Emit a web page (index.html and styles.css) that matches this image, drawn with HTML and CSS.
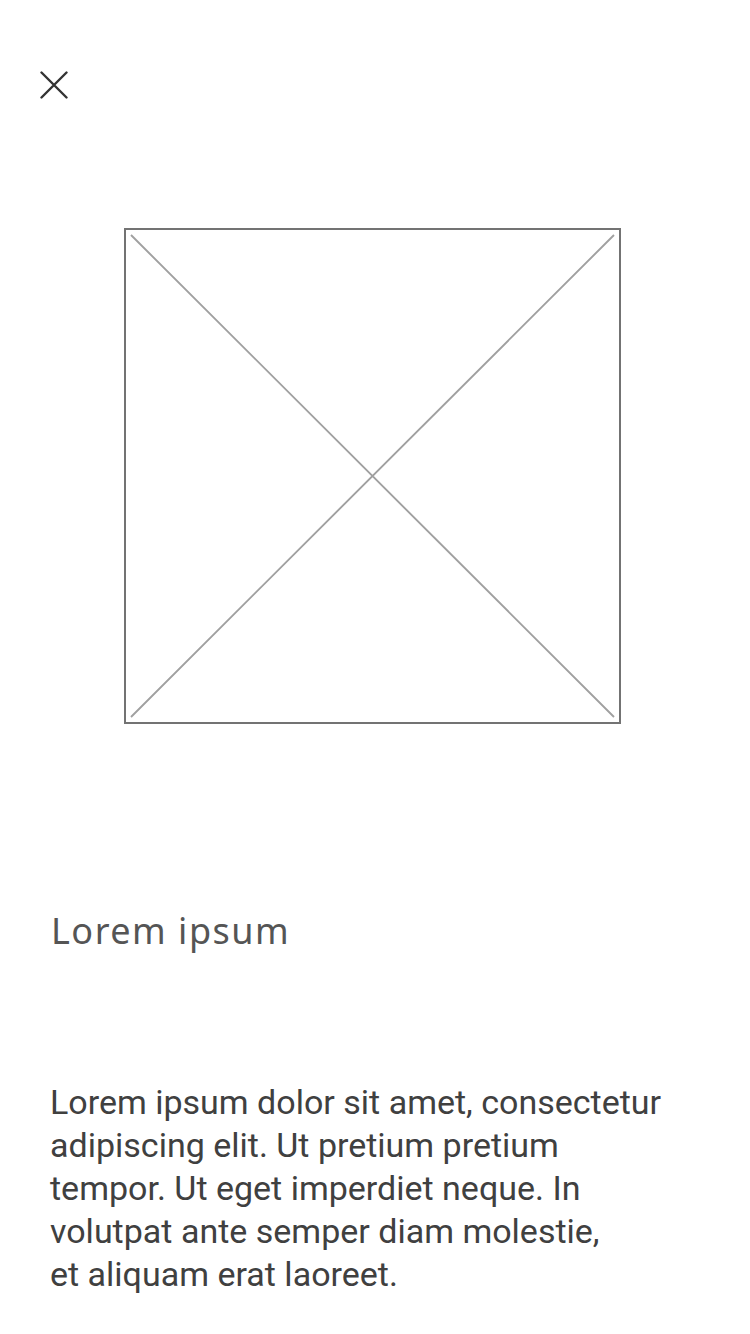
FILE: index.html
```html
<!DOCTYPE html>
<html>
<head>
<meta charset="utf-8">
<link rel="stylesheet" href="styles.css">
</head>
<body>
<div class="screen">
  <div class="statusbar"></div>
  <header class="topbar">
    <button class="close" aria-label="Close">
      <svg width="28" height="28" viewBox="0 0 28 28"><path d="M1.5 1.5 L26.5 26.5 M26.5 1.5 L1.5 26.5" stroke="#333" stroke-width="2.4" stroke-linecap="round" fill="none"/></svg>
    </button>
  </header>
  <div class="media">
    <div class="placeholder">
      <svg viewBox="0 0 493 492" preserveAspectRatio="none"><path d="M5 5 L488 487 M488 5 L5 487" stroke="#a0a0a0" stroke-width="1.9" fill="none"/></svg>
    </div>
  </div>
  <h1 class="title">Lorem ipsum</h1>
  <p class="body">Lorem ipsum dolor sit amet, consectetur<br>adipiscing elit. Ut pretium pretium<br>tempor. Ut eget imperdiet neque. In<br>volutpat ante semper diam molestie,<br>et aliquam erat laoreet.</p>
</div>
</body>
</html>
```
FILE: styles.css
```css
html, body {
  margin: 0;
  padding: 0;
  background: #fff;
}
.screen {
  width: 750px;
  height: 1334px;
  display: flex;
  flex-direction: column;
  overflow: hidden;
}
.statusbar {
  height: 40px;
}
.topbar {
  height: 110px;
  padding-left: 40px;
}
.close {
  margin-top: 31px;
  padding: 0;
  border: 0;
  background: none;
  width: 28px;
  height: 28px;
  display: block;
}
.close svg { display: block; }
.media {
  padding-top: 78px;
  padding-left: 124px;
}
.placeholder {
  width: 493px;
  height: 492px;
  border: 2px solid #737373;
}
.placeholder svg {
  display: block;
  width: 100%;
  height: 100%;
}
.title {
  margin: 182px 0 0 51px;
  font-family: "Noto Sans", sans-serif;
  font-weight: 400;
  font-size: 36px;
  letter-spacing: 1.5px;
  color: #555;
  line-height: 50px;
}
.body {
  margin: 125px 0 0 50px;
  font-family: Roboto, sans-serif;
  font-size: 34px;
  letter-spacing: 0;
  line-height: 43px;
  color: #404040;
}
```
